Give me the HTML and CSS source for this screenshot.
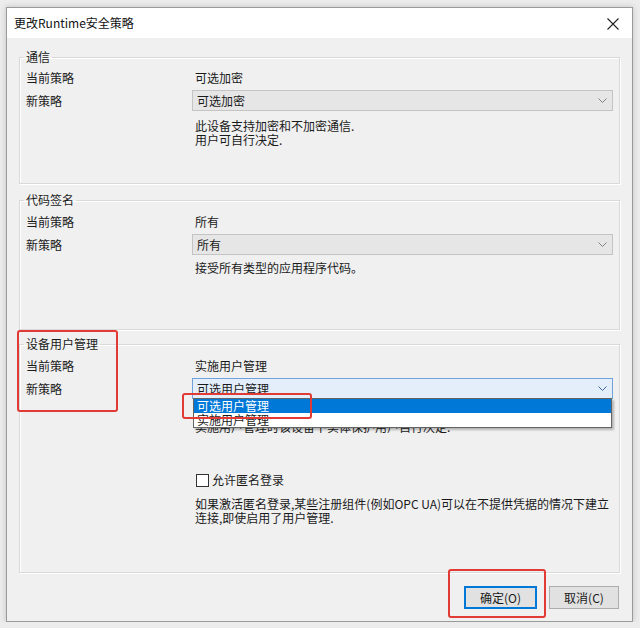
FILE: index.html
```html
<!DOCTYPE html>
<html lang="zh-CN">
<head>
    <meta charset="UTF-8">
    <title>更改Runtime安全策略</title>
    <link rel="stylesheet" href="styles.css">
</head>
<body>
    <div class="dialog">
        <div class="titlebar">
            <span class="title">更改Runtime安全策略</span>
            <svg class="close" width="12" height="12" viewBox="0 0 12 12">
                <path d="M0.5 0.5 L11.5 11.5 M11.5 0.5 L0.5 11.5" stroke="#222" stroke-width="1.1" fill="none"/>
            </svg>
        </div>

        <div class="content">
            <fieldset class="group g-comm">
                <legend>通信</legend>
                <div class="row current">
                    <span class="label">当前策略</span>
                    <span class="value">可选加密</span>
                </div>
                <div class="row">
                    <span class="label">新策略</span>
                    <div class="combo">
                        <span>可选加密</span>
                        <svg class="chevron" width="9" height="5" viewBox="0 0 9 5"><path d="M0.5 0.5 L4.5 4.5 L8.5 0.5" stroke="#808080" fill="none"/></svg>
                    </div>
                </div>
                <div class="desc">此设备支持加密和不加密通信.<br>用户可自行决定.</div>
            </fieldset>

            <fieldset class="group g-code">
                <legend>代码签名</legend>
                <div class="row current">
                    <span class="label">当前策略</span>
                    <span class="value">所有</span>
                </div>
                <div class="row">
                    <span class="label">新策略</span>
                    <div class="combo">
                        <span>所有</span>
                        <svg class="chevron" width="9" height="5" viewBox="0 0 9 5"><path d="M0.5 0.5 L4.5 4.5 L8.5 0.5" stroke="#808080" fill="none"/></svg>
                    </div>
                </div>
                <div class="desc">接受所有类型的应用程序代码。</div>
            </fieldset>

            <fieldset class="group g-user">
                <legend>设备用户管理</legend>
                <div class="row current">
                    <span class="label">当前策略</span>
                    <span class="value">实施用户管理</span>
                </div>
                <div class="row">
                    <span class="label">新策略</span>
                    <div class="combo focused">
                        <span>可选用户管理</span>
                        <svg class="chevron" width="9" height="5" viewBox="0 0 9 5"><path d="M0.5 0.5 L4.5 4.5 L8.5 0.5" stroke="#3c6a9c" fill="none"/></svg>
                        <ul class="dropdown">
                            <li class="selected">可选用户管理</li>
                            <li>实施用户管理</li>
                        </ul>
                    </div>
                </div>
                <div class="desc">可以选择是否在该设备上使用用户管理功能。<br>实施用户管理时该设备下实体保护用户自行决定.</div>
                <label class="check">
                    <span class="box"></span>
                    <span>允许匿名登录</span>
                </label>
                <div class="desc desc-anon">如果激活匿名登录,某些注册组件(例如OPC UA)可以在不提供凭据的情况下建立<br>连接,即使启用了用户管理.</div>
            </fieldset>

            <div class="buttons">
                <button class="btn default">确定(O)</button>
                <button class="btn">取消(C)</button>
            </div>
        </div>
    </div>

    <!-- annotation boxes drawn over the screenshot -->
    <div class="mark mark-group"></div>
    <div class="mark mark-option"></div>
    <div class="mark mark-ok"></div>
</body>
</html>
```

FILE: styles.css
```css
body {
    margin: 0;
    background: #ececec;
    font-family: "Noto Sans CJK SC", "Noto Sans", sans-serif;
    font-size: 12px;
    color: #1a1a1a;
}

.dialog {
    margin: 7px 0 0 6px;
    width: 627px;
    box-sizing: border-box;
    border: 1px solid #9a9a9a;
    background: #f0f0f0;
    box-shadow: 0 0 6px rgba(0, 0, 0, 0.18);
}

.titlebar {
    height: 30px;
    background: #fff;
    display: flex;
    align-items: center;
    justify-content: space-between;
    padding: 0 13px 0 7px;
}

.title {
    font-size: 12px;
    line-height: 16px;
    color: #111;
}

.close {
    display: block;
    margin-top: 2px;
}

.content {
    padding: 11px 12px 12px;
}

.group {
    margin: 0;
    padding: 0 6px;
    border: 1px solid #d9d9d9;
    box-shadow: inset 1px 1px 0 #fff, 1px 1px 0 #fff;
    min-inline-size: 0;
}

.group legend {
    padding: 0 2px;
    margin-left: -2px;
    line-height: 16px;
}

.g-comm { padding-bottom: 36px; }
.g-code { margin-top: 8px; padding-bottom: 54px; }
.g-user { margin-top: 6px; padding-bottom: 47px; }

.row {
    display: grid;
    grid-template-columns: 166px 1fr;
    align-items: center;
    margin-top: 3px;
}

.row.current {
    height: 20px;
}

.g-comm .row.current {
    margin-top: 2px;
}

.value {
    padding-left: 3px;
}

.combo {
    position: relative;
    height: 21px;
    box-sizing: border-box;
    border: 1px solid #c4c4c4;
    background: #e6e6e6;
    display: flex;
    align-items: center;
    justify-content: space-between;
    padding: 0 4px 0 4px;
}

.combo .chevron {
    display: block;
    margin-right: 1px;
}

.combo.focused {
    border-color: #6fa3d9;
    background: #e3eefa;
}

.dropdown {
    position: absolute;
    top: 100%;
    left: 0;
    right: 0;
    margin: 0;
    padding: 0;
    list-style: none;
    background: #fff;
    border: 1px solid #646464;
    box-shadow: 2px 2px 2px rgba(0, 0, 0, 0.25);
    z-index: 2;
}

.dropdown li {
    height: 14px;
    line-height: 14px;
    padding-left: 3px;
}

.dropdown li.selected {
    background: #0078d7;
    color: #fff;
}

.desc {
    margin: 8px 0 0 169px;
    line-height: 14px;
}

.g-code .desc { margin-top: 6px; }
.g-user .desc { margin-top: 7px; }

.check {
    display: flex;
    align-items: center;
    margin: 39px 0 0 170px;
    height: 14px;
    line-height: 14px;
}

.check .box {
    width: 11px;
    height: 11px;
    border: 1px solid #333;
    background: #fff;
    margin-right: 3px;
}

.g-user .desc-anon {
    margin-top: 10px;
}

.buttons {
    display: flex;
    justify-content: flex-end;
    gap: 12px;
    margin-top: 13px;
    padding-right: 1px;
}

.btn {
    height: 23px;
    width: 70px;
    border: 1px solid #adadad;
    background: #e1e1e1;
    font-family: inherit;
    font-size: 12px;
    color: #1a1a1a;
    padding: 0;
}

.btn.default {
    width: 73px;
    border: 2px solid #0078d7;
}

.mark {
    position: absolute;
    border: 2px solid #e23a35;
    border-radius: 3px;
    box-sizing: border-box;
    z-index: 5;
}

.mark-group {
    left: 17px;
    top: 330px;
    width: 101px;
    height: 82px;
}

.mark-option {
    left: 182px;
    top: 393px;
    width: 130px;
    height: 26px;
}

.mark-ok {
    left: 448px;
    top: 569px;
    width: 98px;
    height: 49px;
}
```
